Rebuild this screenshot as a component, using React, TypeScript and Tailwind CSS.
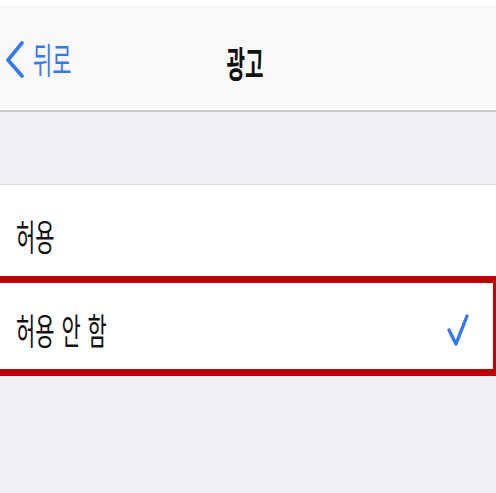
import React from "react";

const font = { fontFamily: '"Noto Sans CJK KR", "Noto Sans", sans-serif' };

export default function App() {
  return (
    <div className="w-[496px] h-[493px] overflow-hidden bg-[#efeff4] flex flex-col" style={font}>
      <div className="h-[5px] bg-white" />
      <div className="h-[107px] bg-[#f9f9f9] border-b-2 border-[#cbcbcf] relative flex items-center">
        <div className="flex items-center pl-[5px] pt-[2px]">
          <svg width="20" height="38" viewBox="0 0 20 38" className="shrink-0">
            <path d="M17 3 L3 20 L17 36" fill="none" stroke="#3478f6" strokeWidth="3.6" strokeLinecap="round" strokeLinejoin="round" />
          </svg>
          <span className="inline-block ml-[8px] text-[36px] leading-none text-[#3478f6] scale-x-[0.58] origin-left -mt-[2px]">뒤로</span>
        </div>
        <div className="absolute inset-0 flex items-center justify-center">
          <span className="inline-block text-[36px] leading-none font-semibold text-[#111] scale-x-[0.56] origin-center mt-[8px] -ml-[6px]">광고</span>
        </div>
      </div>
      <div className="h-[73px] border-b border-[#dcdce0]" />
      <div className="h-[91px] bg-white flex items-center pl-[16px] pt-[8px]">
        <span className="inline-block text-[36px] leading-none text-[#111] scale-x-[0.58] origin-left">허용</span>
      </div>
      <div className="h-[100px] bg-white border-t-[7px] border-b-[7px] border-r-[3px] border-[#c00000] flex items-center justify-between pl-[16px] pr-[23px]">
        <span className="inline-block text-[36px] leading-none text-[#111] scale-x-[0.58] origin-left whitespace-nowrap pt-[6px] [word-spacing:4px]">허용 안 함</span>
        <svg width="24" height="34" viewBox="0 0 24 34" className="shrink-0 mt-[8px]">
          <path d="M3 17 L10 31 L21 3" fill="none" stroke="#3478f6" strokeWidth="3.4" strokeLinecap="round" strokeLinejoin="round" />
        </svg>
      </div>
      <div className="flex-1" />
    </div>
  );
}
